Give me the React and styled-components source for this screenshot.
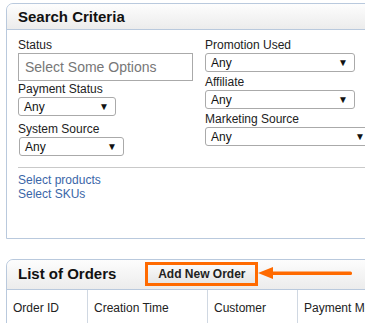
import React from "react";
import styled, { createGlobalStyle } from "styled-components";

const Global = createGlobalStyle`
  html, body { margin: 0; padding: 0; background: #fff; overflow: hidden; }
  body { font-family: "Liberation Sans", Arial, sans-serif; font-size: 12px; color: #222; }
`;

const Page = styled.div`
  width: 365px;
  height: 323px;
  overflow: hidden;
  padding: 3px 0 0 6px;
  box-sizing: border-box;
`;

const Panel = styled.section`
  width: 380px;
  border: 1px solid #b9c9dd;
  border-top-left-radius: 7px;
  background: #fff;
  margin-bottom: ${(p) => p.$gap || 0}px;
  position: relative;
`;

const PanelHeader = styled.div`
  height: ${(p) => p.$h || 25}px;
  border-bottom: 1px solid #b9c9dd;
  border-top-left-radius: 7px;
  background: linear-gradient(#fdfdfd, #ececec);
  display: flex;
  align-items: center;
  padding-left: 11px;
  padding-bottom: ${(p) => p.$pb || 0}px;
  gap: 29px;
`;

const Title = styled.h2`
  margin: 0;
  font-size: 15px;
  font-weight: bold;
  color: #111;
`;

const Body = styled.div`
  padding: 8px 0 0 11px;
  height: 208px;
  box-sizing: border-box;
`;

const Columns = styled.div`
  display: flex;
  gap: 12px;
`;

const Col = styled.div`
  display: flex;
  flex-direction: column;
  width: ${(p) => p.$w}px;
`;

const Label = styled.label`
  line-height: 14px;
  font-size: 12px;
  color: #222;
  margin-top: ${(p) => p.$mt || 0}px;
  margin-bottom: 1px;
  white-space: nowrap;
`;

const MultiInput = styled.div`
  height: 28px;
  border: 1px solid #aaa;
  box-sizing: border-box;
  display: flex;
  align-items: center;
  padding-left: 6px;
  font-size: 14px;
  color: #777;
`;

const Select = styled.div`
  height: 19px;
  width: ${(p) => p.$w}px;
  margin-left: ${(p) => p.$ml || 0}px;
  border: 1px solid #aaa;
  border-radius: 3px;
  box-sizing: border-box;
  display: flex;
  align-items: center;
  justify-content: space-between;
  padding: 0 6px 0 5px;
  font-size: 12px;
  color: #111;
  background: #fff;
`;

const Caret = styled.span`
  font-size: 10px;
  color: #111;
`;

const Links = styled.div`
  margin-top: 11px;
  padding-top: 5px;
  border-top: 1px solid #c9c9c9;
`;

const LinkText = styled.a`
  display: block;
  line-height: 14px;
  color: #3a66a8;
  text-decoration: none;
  font-size: 12px;
`;

const AddButton = styled.button`
  height: 24px;
  width: 113px;
  box-sizing: border-box;
  border: 3px solid #ff6a00;
  background: linear-gradient(#fafafa, #e6e6e6);
  font-family: "Liberation Sans", Arial, sans-serif;
  font-size: 12px;
  font-weight: bold;
  color: #222;
  padding: 0;
`;

const Arrow = styled.svg`
  position: absolute;
  left: 251px;
  top: 5px;
`;

const TableRow = styled.div`
  display: grid;
  grid-template-columns: 81px 120px 90px 1fr;
  height: 36px;
`;

const Th = styled.div`
  display: flex;
  align-items: center;
  padding-left: ${(p) => p.$pl || 6}px;
  border-right: 1px solid #d0d8e2;
  font-size: 12px;
  color: #222;
  white-space: nowrap;
  &:last-child { border-right: 0; }
`;

function Dropdown({ w, ml }) {
  return (
    <Select $w={w} $ml={ml}>
      <span>Any</span>
      <Caret>▼</Caret>
    </Select>
  );
}

export default function App() {
  return (
    <>
      <Global />
      <Page>
        <Panel $gap={20}>
          <PanelHeader $h={25}>
            <Title>Search Criteria</Title>
          </PanelHeader>
          <Body>
            <Columns>
              <Col $w={175}>
                <Label>Status</Label>
                <MultiInput>Select Some Options</MultiInput>
                <Label $mt={1}>Payment Status</Label>
                <Dropdown w={98} />
                <Label $mt={6}>System Source</Label>
                <Dropdown w={105} ml={1} />
              </Col>
              <Col $w={170}>
                <Label>Promotion Used</Label>
                <Dropdown w={150} />
                <Label $mt={3}>Affiliate</Label>
                <Dropdown w={150} />
                <Label $mt={3}>Marketing Source</Label>
                <Dropdown w={167} />
              </Col>
            </Columns>
            <Links>
              <LinkText href="#">Select products</LinkText>
              <LinkText href="#">Select SKUs</LinkText>
            </Links>
          </Body>
        </Panel>
        <Panel>
          <PanelHeader $h={27} $pb={2}>
            <Title>List of Orders</Title>
            <AddButton>Add New Order</AddButton>
          </PanelHeader>
          <Arrow width="100" height="16" viewBox="0 0 100 16">
            <polygon points="0,8 15,2 15,14" fill="#ff6a00" />
            <rect x="13" y="6.5" width="81" height="3.5" rx="1.5" fill="#ff6a00" />
          </Arrow>
          <TableRow>
            <Th $pl={6}>Order ID</Th>
            <Th>Creation Time</Th>
            <Th>Customer</Th>
            <Th>Payment Method</Th>
          </TableRow>
        </Panel>
      </Page>
    </>
  );
}
